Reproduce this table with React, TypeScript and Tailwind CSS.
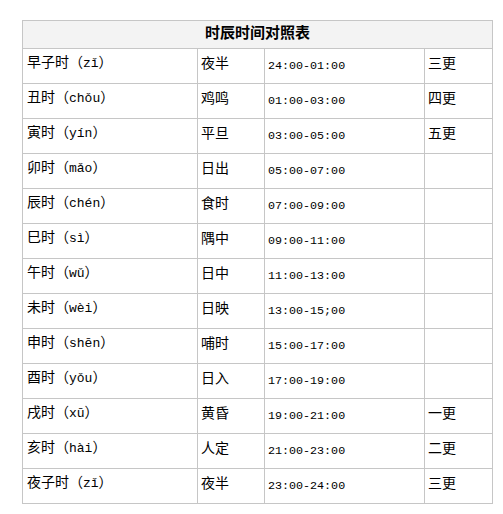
import React from "react";

type Row = { name: string; py: string; alias: string; time: string; geng: string };

const rows: Row[] = [
  { name: "早子时", py: "zǐ", alias: "夜半", time: "24:00-01:00", geng: "三更" },
  { name: "丑时", py: "chǒu", alias: "鸡鸣", time: "01:00-03:00", geng: "四更" },
  { name: "寅时", py: "yín", alias: "平旦", time: "03:00-05:00", geng: "五更" },
  { name: "卯时", py: "mǎo", alias: "日出", time: "05:00-07:00", geng: "" },
  { name: "辰时", py: "chén", alias: "食时", time: "07:00-09:00", geng: "" },
  { name: "巳时", py: "sì", alias: "隅中", time: "09:00-11:00", geng: "" },
  { name: "午时", py: "wǔ", alias: "日中", time: "11:00-13:00", geng: "" },
  { name: "未时", py: "wèi", alias: "日映", time: "13:00-15;00", geng: "" },
  { name: "申时", py: "shēn", alias: "哺时", time: "15:00-17:00", geng: "" },
  { name: "酉时", py: "yǒu", alias: "日入", time: "17:00-19:00", geng: "" },
  { name: "戌时", py: "xū", alias: "黄昏", time: "19:00-21:00", geng: "一更" },
  { name: "亥时", py: "hài", alias: "人定", time: "21:00-23:00", geng: "二更" },
  { name: "夜子时", py: "zǐ", alias: "夜半", time: "23:00-24:00", geng: "三更" },
];

const cjk = "font-['Noto_Sans_CJK_SC','Noto_Sans',sans-serif]";
const mono = "font-['Liberation_Mono','DejaVu_Sans_Mono',monospace]";
const cell = "h-[35px] border-r border-b border-[#c6c6c6] flex items-center";

export default function App() {
  return (
    <div className="w-[503px] h-[514px] bg-white pt-[20px] pl-[22px]">
      <div className={`w-[471px] border-l border-t border-[#c6c6c6] text-black ${cjk}`}>
        <div className="h-[28px] border-r border-b border-[#c6c6c6] bg-[#f3f3f3] flex items-center justify-center pb-[7px] text-[15px] font-bold leading-none">
          时辰时间对照表
        </div>
        <div className="grid grid-cols-[175px_67px_160px_68px]">
          {rows.map((r, i) => (
            <React.Fragment key={i}>
              <div className={`${cell} pl-[4px] pb-[8px] text-[14px] leading-none`}>
                <span>
                  {r.name}（<span className={`${mono} text-[13px]`}>{r.py}</span>）
                </span>
              </div>
              <div className={`${cell} pl-[3px] pb-[8px] text-[14px] leading-none`}>
                {r.alias}
              </div>
              <div className={`${cell} pl-[3px] pt-[2px] text-[11.7px] leading-none ${mono}`}>
                {r.time}
              </div>
              <div className={`${cell} pl-[3px] pb-[8px] text-[14px] leading-none`}>
                {r.geng}
              </div>
            </React.Fragment>
          ))}
        </div>
      </div>
    </div>
  );
}
